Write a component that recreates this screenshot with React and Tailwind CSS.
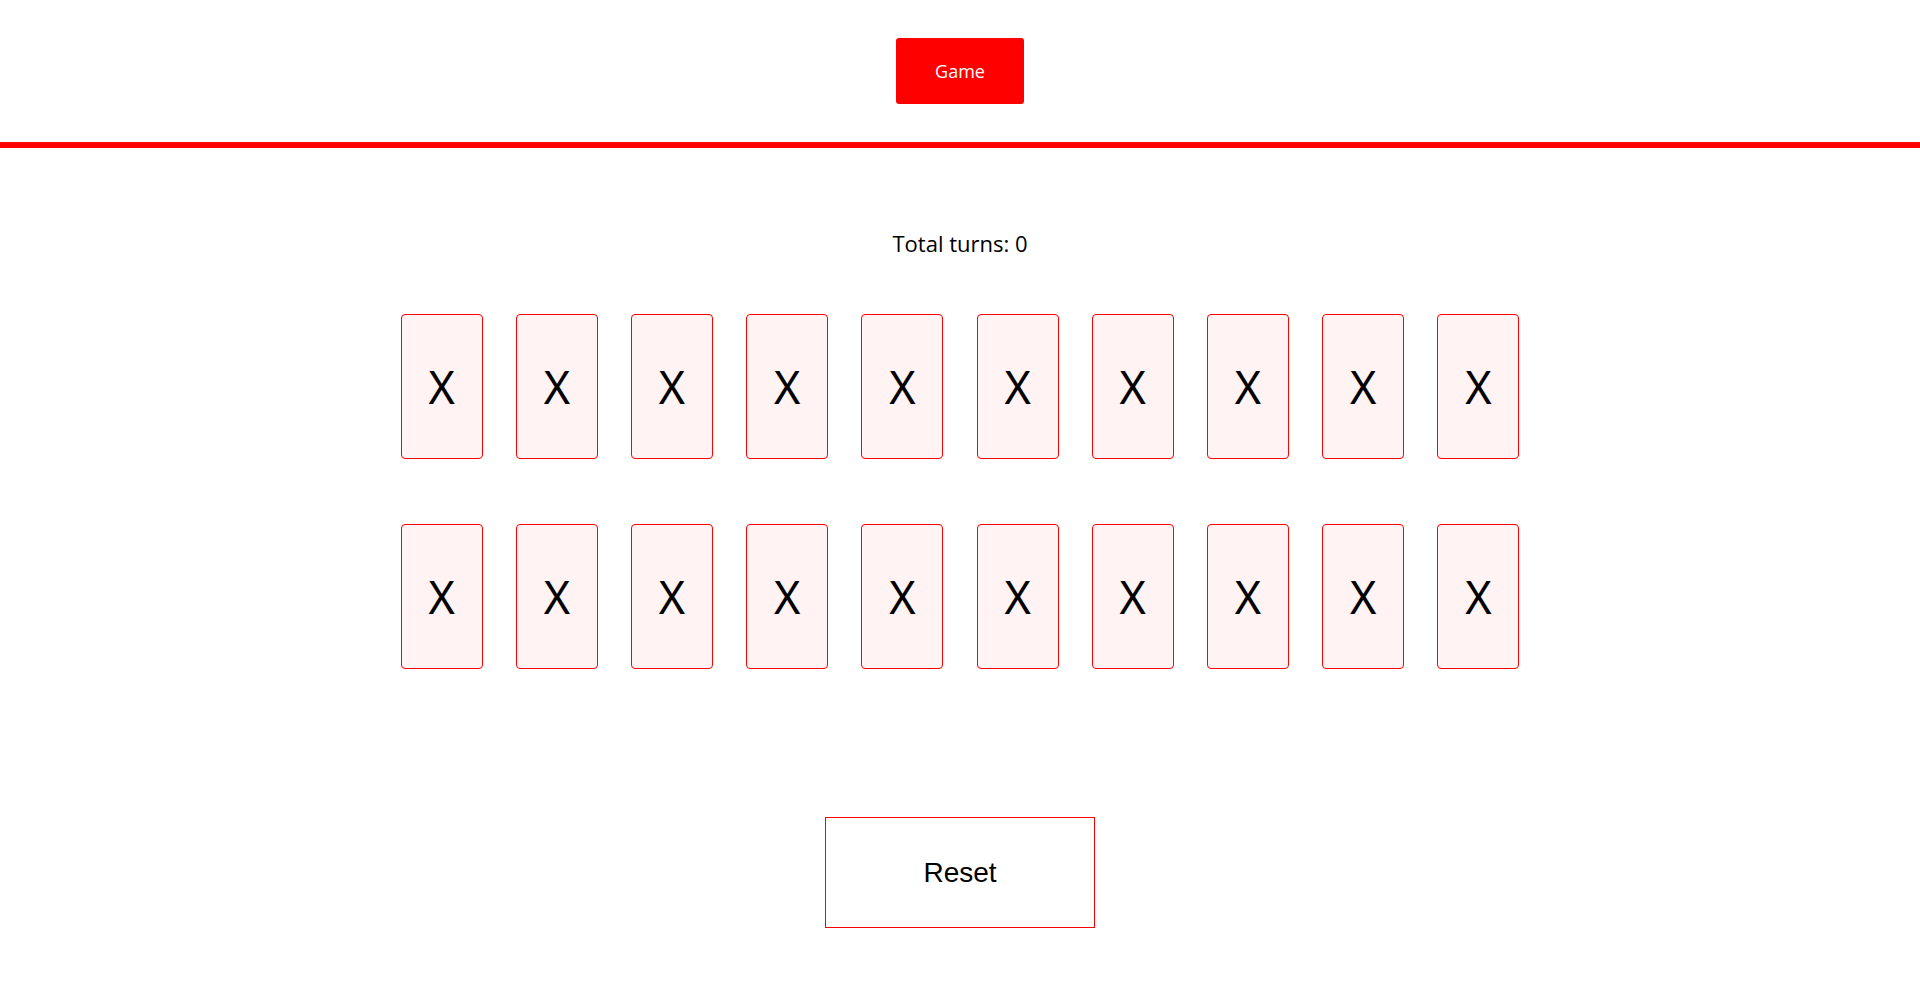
import React from 'react';

const cards = Array.from({ length: 20 }, (_, i) => ({ id: i, label: 'X' }));

function Card({ label }) {
  return (
    <button
      type="button"
      className="w-[82px] h-[145px] flex items-center justify-center border border-[#ff0000] rounded-[4px] bg-[#fff3f3] text-[45px] text-black font-['Noto_Sans',sans-serif] leading-none"
    >
      {label}
    </button>
  );
}

export default function App() {
  const rows = [cards.slice(0, 10), cards.slice(10, 20)];

  return (
    <div className="min-h-screen bg-white font-['Open_Sans',sans-serif]">
      <header className="flex flex-col items-center pt-[38px]">
        <button
          type="button"
          className="w-[128px] h-[66px] bg-[#ff0000] text-white text-[18px] rounded-[3px]"
        >
          Game
        </button>
      </header>
      <div className="mt-[38px] h-[6px] w-full bg-[#ff0000]" />

      <main className="flex flex-col items-center">
        <p className="mt-[80px] text-[22px] leading-[30px] text-black">Total turns: 0</p>

        <div className="mt-[56px] flex flex-col gap-[65px]">
          {rows.map((row, r) => (
            <div key={r} className="flex gap-[33.2px]">
              {row.map((c) => (
                <Card key={c.id} label={c.label} />
              ))}
            </div>
          ))}
        </div>

        <button
          type="button"
          className="mt-[148px] w-[270px] h-[111px] border border-[#ff0000] bg-white text-[28px] text-black font-['Liberation_Sans',Arial,sans-serif]"
        >
          Reset
        </button>
      </main>
    </div>
  );
}
